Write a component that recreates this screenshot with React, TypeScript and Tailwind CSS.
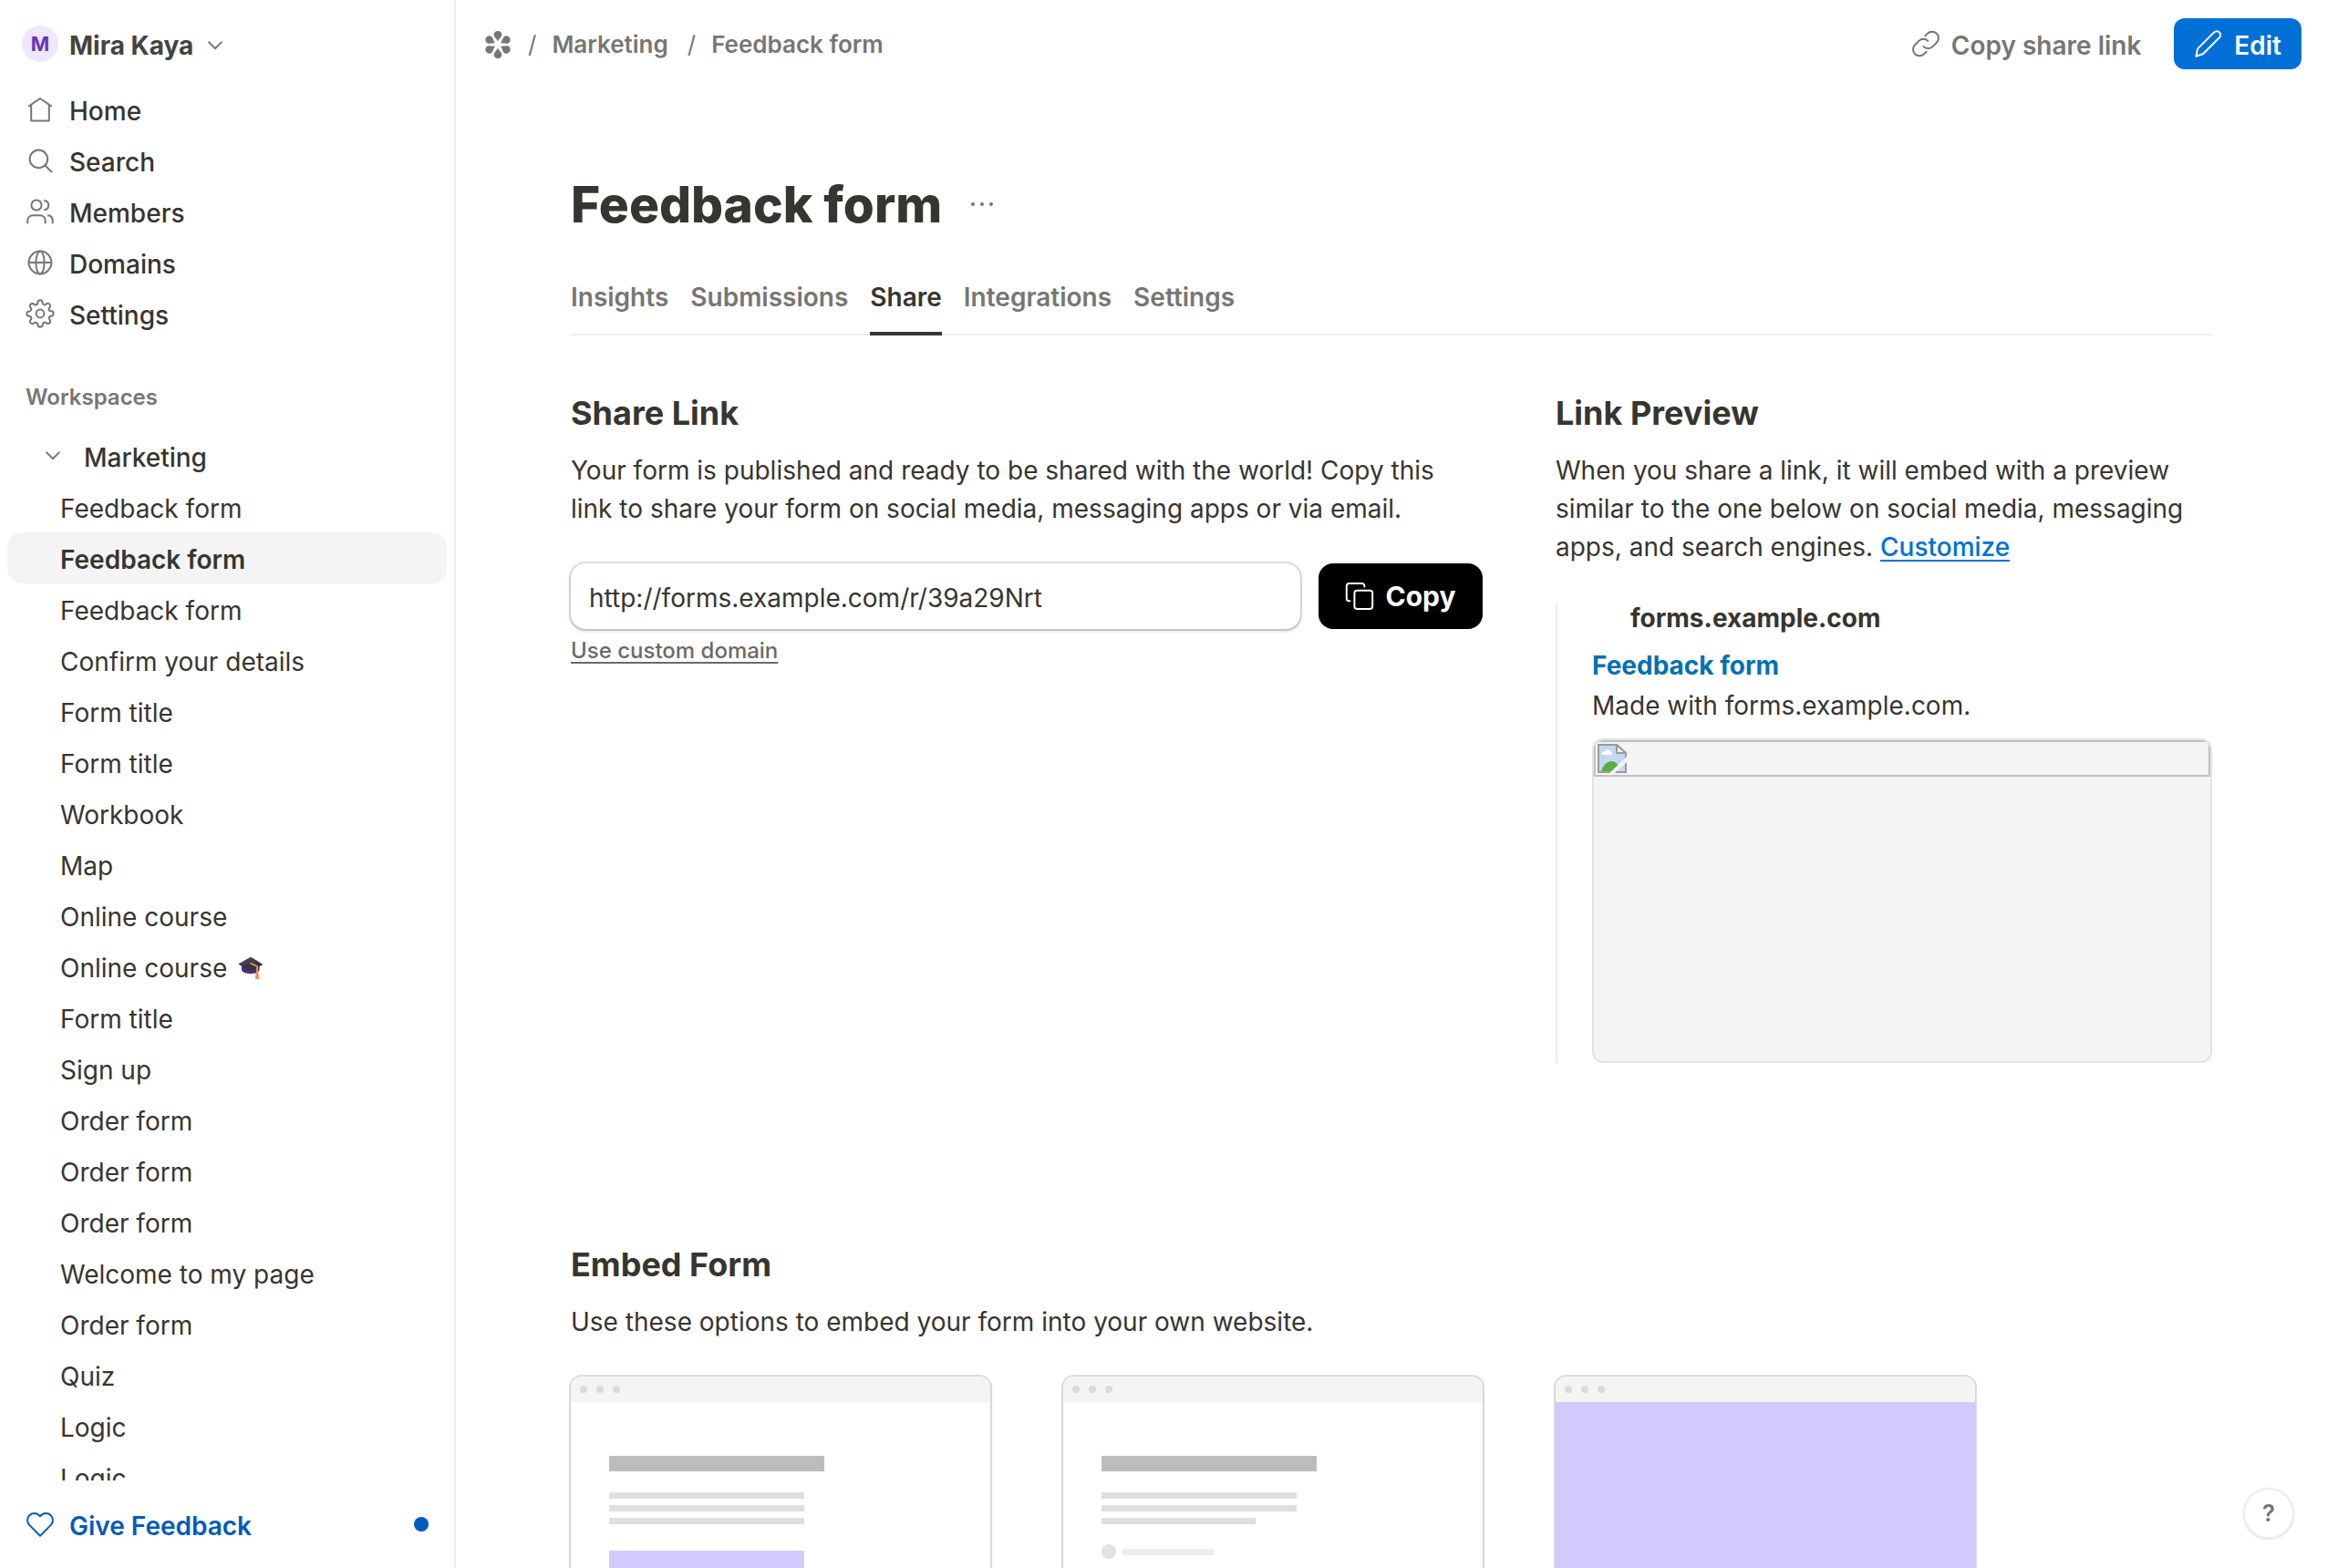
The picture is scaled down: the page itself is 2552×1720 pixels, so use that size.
import React, { useState } from 'react';
import clsx from 'clsx';

type IconProps = { className?: string };

const FORMS: { id: number; title: string; emoji?: boolean }[] = [
  { id: 1, title: 'Feedback form' },
  { id: 2, title: 'Feedback form' },
  { id: 3, title: 'Feedback form' },
  { id: 4, title: 'Confirm your details' },
  { id: 5, title: 'Form title' },
  { id: 6, title: 'Form title' },
  { id: 7, title: 'Workbook' },
  { id: 8, title: 'Map' },
  { id: 9, title: 'Online course' },
  { id: 10, title: 'Online course', emoji: true },
  { id: 11, title: 'Form title' },
  { id: 12, title: 'Sign up' },
  { id: 13, title: 'Order form' },
  { id: 14, title: 'Order form' },
  { id: 15, title: 'Order form' },
  { id: 16, title: 'Welcome to my page' },
  { id: 17, title: 'Order form' },
  { id: 18, title: 'Quiz' },
  { id: 19, title: 'Logic' },
  { id: 20, title: 'Logic' },
];

const TABS = ['Insights', 'Submissions', 'Share', 'Integrations', 'Settings'];

// Shared wrapper for the 32px line icons
function LineIcon({ className, children }: IconProps & { children: React.ReactNode }) {
  return (
    <svg
      viewBox="0 0 32 32"
      className={clsx('h-8 w-8 shrink-0', className)}
      fill="none"
      stroke="currentColor"
      strokeWidth={2}
      strokeLinecap="round"
      strokeLinejoin="round"
      aria-hidden="true"
    >
      {children}
    </svg>
  );
}

const HomeIcon = () => (
  <LineIcon>
    <path d="M3.8 12.3 16 4l12.2 8.3M6.2 11v17.6h19.6V11" />
  </LineIcon>
);

const SearchIcon = () => (
  <LineIcon>
    <circle cx="14.4" cy="14.4" r="9.8" />
    <path d="m21.4 21.5 7.2 7" />
  </LineIcon>
);

const MembersIcon = () => (
  <LineIcon>
    <circle cx="12" cy="9" r="5.6" />
    <path d="M2.3 28.4v-2.6a5.6 5.6 0 0 1 5.6-5.6h8.2a5.6 5.6 0 0 1 5.6 5.6v2.6" />
    <path d="M21 3.9a5.3 5.3 0 0 1 0 10.4M25 20.3a5.6 5.6 0 0 1 4.7 5.5v2.6" />
  </LineIcon>
);

const GlobeIcon = () => (
  <LineIcon>
    <circle cx="16" cy="16" r="12.4" />
    <ellipse cx="16" cy="16" rx="4.6" ry="12.4" />
    <path d="M3.6 16h24.8" />
  </LineIcon>
);

const GearIcon = () => (
  <svg
    viewBox="0 0 24 24"
    className="h-8 w-8 shrink-0"
    fill="none"
    stroke="currentColor"
    strokeWidth={1.5}
    strokeLinecap="round"
    strokeLinejoin="round"
    aria-hidden="true"
  >
    <circle cx="12" cy="12" r="3.3" />
    <path d="M19.4 15a1.65 1.65 0 0 0 .33 1.82l.06.06a2 2 0 0 1 0 2.83 2 2 0 0 1-2.83 0l-.06-.06a1.65 1.65 0 0 0-1.82-.33 1.65 1.65 0 0 0-1 1.51V21a2 2 0 0 1-2 2 2 2 0 0 1-2-2v-.09A1.65 1.65 0 0 0 9 19.4a1.65 1.65 0 0 0-1.82.33l-.06.06a2 2 0 0 1-2.83 0 2 2 0 0 1 0-2.83l.06-.06a1.65 1.65 0 0 0 .33-1.82 1.65 1.65 0 0 0-1.51-1H3a2 2 0 0 1-2-2 2 2 0 0 1 2-2h.09A1.65 1.65 0 0 0 4.6 9a1.65 1.65 0 0 0-.33-1.82l-.06-.06a2 2 0 0 1 0-2.83 2 2 0 0 1 2.83 0l.06.06a1.65 1.65 0 0 0 1.82.33H9a1.65 1.65 0 0 0 1-1.51V3a2 2 0 0 1 2-2 2 2 0 0 1 2 2v.09a1.65 1.65 0 0 0 1 1.51 1.65 1.65 0 0 0 1.82-.33l.06-.06a2 2 0 0 1 2.83 0 2 2 0 0 1 0 2.83l-.06.06a1.65 1.65 0 0 0-.33 1.82V9a1.65 1.65 0 0 0 1.51 1H21a2 2 0 0 1 2 2 2 2 0 0 1-2 2h-.09a1.65 1.65 0 0 0-1.51 1z" />
  </svg>
);

const HeartIcon = () => (
  <LineIcon>
    <path d="M16 28.7 4.3 16.9a7.4 7.4 0 0 1 0-10.6 7.6 7.6 0 0 1 10.7 0l1 1 1-1a7.6 7.6 0 0 1 10.7 0 7.4 7.4 0 0 1 0 10.6z" />
  </LineIcon>
);

const LinkIcon = () => (
  <LineIcon>
    <path d="M15.3 7.3 18 4.8a7 7 0 0 1 9.9 9.9l-4.4 4.4a7 7 0 0 1-9.9 0" />
    <path d="m16.7 24.7-2.7 2.5a7 7 0 0 1-9.9-9.9l4.4-4.4a7 7 0 0 1 9.9 0" />
  </LineIcon>
);

const PencilIcon = () => (
  <LineIcon>
    <path d="m2.4 29.8 1.8-8.4L22.2 3.4a4 4 0 0 1 5.8 0 4 4 0 0 1 0 5.8L10.2 27z" />
  </LineIcon>
);

const CopyIcon = () => (
  <LineIcon>
    <rect x="10.4" y="9.8" width="19.8" height="20.2" rx="3" />
    <path d="M5.4 21.2H4.6a2.8 2.8 0 0 1-2.8-2.8V4.8A2.8 2.8 0 0 1 4.6 2h14a2.8 2.8 0 0 1 2.8 2.8v.8" />
  </LineIcon>
);

const ChevronIcon = () => (
  <svg
    viewBox="0 0 16 10"
    className="h-[10px] w-4 shrink-0 text-[#777672]"
    fill="none"
    stroke="currentColor"
    strokeWidth={2}
    strokeLinecap="round"
    strokeLinejoin="round"
    aria-hidden="true"
  >
    <path d="m1.2 1.4 6.8 6.8 6.8-6.8" />
  </svg>
);

const FlowerLogo = () => (
  <svg viewBox="-16 -16 32 32" className="h-8 w-8" fill="currentColor" aria-hidden="true">
    {[0, 60, 120, 180, 240, 300].map((angle) => (
      <path
        key={angle}
        transform={`rotate(${angle})`}
        d="M0-3.4C-1-6.6-4.3-8-4.3-11a4.3 4.1 0 0 1 8.6 0C4.3-8 1-6.6 0-3.4z"
      />
    ))}
  </svg>
);

const GraduationCap = () => (
  <svg viewBox="0 0 28 26" className="mt-1 h-[26px] w-7" role="img" aria-label="Graduation cap">
    <path d="M4 10v5c1 3 5 4 10 4s8.500-1 9.500-4v-5z" fill="#4a2f78" />
    <path d="M14 1 .5 8.500 13 16.500 27.500 9z" fill="#3a3043" />
    <path d="M14 1 .5 8.500l3 2L22 5.500z" fill="#483c55" />
    <path d="M13.500 7.500 21 11v8" fill="none" stroke="#e9a23b" strokeWidth="1.800" />
    <path d="M19.500 18.500h3l.5 6.500h-4z" fill="#f58a4b" />
  </svg>
);

// The placeholder the browser shows for an image that did not load
const BrokenImage = () => (
  <svg viewBox="0 0 32 32" className="h-8 w-8" role="img" aria-label="Link preview image">
    <path d="M1 1h20l10 9v21H1z" fill="#c6d7f6" stroke="#9a9a9a" strokeWidth="2" />
    <path d="M5 12a3 3 0 0 1 3-4 4 4 0 0 1 7 1 2.500 2.500 0 0 1 1 3z" fill="#fff" />
    <path d="M4 30c2-7 7-11 11-11s6 2 8 5l-6 6z" fill="#5aad3f" />
    <path d="M21 1v9h10z" fill="#f2f2f2" stroke="#9a9a9a" strokeWidth="2" />
    <path d="m13 32 19-18v6L19 32z" fill="#f4f4f4" />
    <path d="M20 31h11V22" fill="none" stroke="#9a9a9a" strokeWidth="2" />
  </svg>
);

const NAV = [
  { label: 'Home', icon: <HomeIcon /> },
  { label: 'Search', icon: <SearchIcon /> },
  { label: 'Members', icon: <MembersIcon /> },
  { label: 'Domains', icon: <GlobeIcon /> },
  { label: 'Settings', icon: <GearIcon /> },
];

function Sidebar() {
  const [activeForm, setActiveForm] = useState(2);

  return (
    <aside className="flex h-full w-[500px] shrink-0 flex-col border-r-2 border-[#ededec]">
      <div className="flex min-h-0 flex-1 flex-col overflow-hidden">
        <button className="mt-5 flex h-14 shrink-0 items-center gap-3 px-6 font-bold text-[#444340]">
          <span className="flex h-10 w-10 items-center justify-center rounded-full bg-[#efe6ff] text-[22px] font-bold text-[#6236b5]">
            M
          </span>
          <span className="mt-1">Mira Kaya</span>
          <span className="mt-1 ml-1">
            <ChevronIcon />
          </span>
        </button>

        <nav className="mt-4 shrink-0">
          {NAV.map((item) => (
            <a key={item.label} href="#" className="flex h-14 items-center gap-4 px-7 font-medium">
              <span className="text-[#777672]">{item.icon}</span>
              <span className="mt-1">{item.label}</span>
            </a>
          ))}
        </nav>

        <h2 className="mt-12 shrink-0 px-7 text-2xl leading-8 font-semibold text-[#777672]">Workspaces</h2>

        <button className="mt-5 flex h-14 shrink-0 items-center gap-[26px] pl-[50px] font-medium">
          <ChevronIcon />
          <span className="mt-1">Marketing</span>
        </button>

        <ul className="px-2">
          {FORMS.map((form) => (
            <li key={form.id}>
              <a
                href="#"
                onClick={() => setActiveForm(form.id)}
                className={clsx(
                  'flex h-14 items-center gap-3 rounded-2xl pl-[58px]',
                  form.id === activeForm && 'bg-[#f4f4f4] font-semibold'
                )}
              >
                <span className="mt-1">{form.title}</span>
                {form.emoji && <GraduationCap />}
              </a>
            </li>
          ))}
        </ul>
      </div>

      <a href="#" className="my-5 flex h-14 shrink-0 items-center gap-4 px-7 font-semibold text-[#005bb8]">
        <HeartIcon />
        <span className="mt-1">Give Feedback</span>
        <span className="ml-auto h-4 w-4 rounded-full bg-[#005bbf]" />
      </a>
    </aside>
  );
}

function TopBar() {
  return (
    <header className="flex h-24 shrink-0 items-center pr-7 pl-[30px] text-[#777672]">
      <nav
        aria-label="Breadcrumb"
        className="flex items-center gap-[17px] pt-[2px] text-[26px] leading-9 font-semibold"
      >
        <a href="#" aria-label="Dashboard">
          <FlowerLogo />
        </a>
        <span className="font-normal">/</span>
        <a href="#">Marketing</a>
        <span className="ml-1 font-normal">/</span>
        <a href="#">Feedback form</a>
      </nav>
      <div className="ml-auto flex items-center gap-9 font-semibold">
        <button className="flex items-center gap-3">
          <LinkIcon />
          <span className="mt-1">Copy share link</span>
        </button>
        <button className="flex h-14 items-center gap-3 rounded-xl bg-[#0070d7] px-[22px] text-white">
          <PencilIcon />
          <span className="mt-1">Edit</span>
        </button>
      </div>
    </header>
  );
}

function ShareLink() {
  return (
    <section>
      <h2 className="text-4xl leading-[44px] font-bold">Share Link</h2>
      <p className="mt-5 leading-[42px]">
        Your form is published and ready to be shared with the world! Copy this link to share your form on social
        media, messaging apps or via email.
      </p>
      <div className="mt-[39px] flex gap-5">
        <input
          type="text"
          readOnly
          aria-label="Share link"
          value="http://forms.example.com/r/39a29Nrt"
          className="h-[72px] min-w-0 flex-1 rounded-2xl px-5 pt-1 shadow-[0_0_0_2px_rgba(55,53,47,0.16),0_2px_4px_rgba(55,53,47,0.24)] outline-none"
        />
        <button className="flex h-[72px] w-[180px] items-center justify-center gap-3 rounded-2xl bg-black text-3xl font-bold text-white">
          <CopyIcon />
          Copy
        </button>
      </div>
      <a
        href="#"
        className="mt-2 inline-block text-2xl leading-8 font-medium text-[#6b6a66] underline decoration-2 underline-offset-4"
      >
        Use custom domain
      </a>
    </section>
  );
}

function LinkPreview() {
  return (
    <section>
      <h2 className="text-4xl leading-[44px] font-bold">Link Preview</h2>
      <p className="mt-5 leading-[42px]">
        When you share a link, it will embed with a preview similar to the one below on social media, messaging apps,
        and search engines.{' '}
        <a href="#" className="font-medium text-[#0070d7] underline decoration-2 underline-offset-4">
          Customize
        </a>
      </p>
      <div className="mt-[39px] border-l-2 border-[#ededec] pl-[38px]">
        <div className="pl-[42px] leading-9 font-bold">forms.example.com</div>
        <a href="#" className="mt-3 block leading-[44px] font-bold text-[#0071b2]">
          Feedback form
        </a>
        <p className="leading-[44px]">Made with forms.example.com.</p>
        <div className="mt-[14px] aspect-[680/356] overflow-hidden rounded-xl border-2 border-[#e2e2e2] bg-[#f4f4f4]">
          <div className="border-2 border-[#c0c0c0] p-[2px]">
            <BrokenImage />
          </div>
        </div>
      </div>
    </section>
  );
}

function EmbedCard({ filled, children }: { filled?: boolean; children?: React.ReactNode }) {
  return (
    <button className="flex h-[320px] w-[460px] flex-col overflow-hidden rounded-xl shadow-[0_0_0_2px_rgba(55,53,47,0.16),0_2px_4px_rgba(55,53,47,0.12)]">
      <span className="flex h-7 w-full shrink-0 items-center gap-[10px] bg-[#f4f4f4] px-[10px]">
        <span className="h-2 w-2 rounded-full bg-[#dadada]" />
        <span className="h-2 w-2 rounded-full bg-[#dadada]" />
        <span className="h-2 w-2 rounded-full bg-[#dadada]" />
      </span>
      <span className={clsx('block w-full flex-1 px-[42px] pt-[59px]', filled && 'bg-[#d2cafd]')}>{children}</span>
    </button>
  );
}

function EmbedForm() {
  return (
    <section className="mt-[199px]">
      <h2 className="text-4xl leading-[44px] font-bold">Embed Form</h2>
      <p className="mt-5 leading-[42px]">Use these options to embed your form into your own website.</p>
      <div className="mt-[39px] flex gap-20">
        <EmbedCard>
          <span className="block h-[17px] w-[236px] bg-[#bcbcbc]" />
          <span className="mt-[23px] flex flex-col gap-[7px]">
            <span className="h-[7px] w-[214px] bg-[#dedede]" />
            <span className="h-[7px] w-[214px] bg-[#dedede]" />
            <span className="h-[7px] w-[214px] bg-[#dedede]" />
          </span>
          <span className="mt-[29px] block h-20 w-[214px] bg-[#d2cafd]" />
        </EmbedCard>
        <EmbedCard>
          <span className="block h-[17px] w-[236px] bg-[#bcbcbc]" />
          <span className="mt-[23px] flex flex-col gap-[7px]">
            <span className="h-[7px] w-[214px] bg-[#dedede]" />
            <span className="h-[7px] w-[214px] bg-[#dedede]" />
            <span className="h-[7px] w-[169px] bg-[#dedede]" />
          </span>
          <span className="mt-[22px] flex items-center gap-[7px]">
            <span className="h-4 w-4 rounded-full bg-[#e2e2e2]" />
            <span className="h-[7px] w-[100px] bg-[#ededed]" />
          </span>
        </EmbedCard>
        <EmbedCard filled />
      </div>
    </section>
  );
}

export default function App() {
  const [activeTab, setActiveTab] = useState('Share');

  return (
    <div className="flex h-screen overflow-hidden bg-white font-['Inter',sans-serif] text-[28px] leading-10 text-[#37352f]">
      <Sidebar />

      <div className="flex min-w-0 flex-1 flex-col">
        <TopBar />
        <main className="min-h-0 flex-1 overflow-hidden px-16">
          <div className="mx-auto w-full max-w-[1800px] pt-24">
            <div className="flex items-center gap-8">
              <h1 className="text-[55px] leading-[64px] font-extrabold">Feedback form</h1>
              <button aria-label="More options" className="flex gap-[6px]">
                <span className="h-1 w-1 rounded-full bg-[#777672]" />
                <span className="h-1 w-1 rounded-full bg-[#777672]" />
                <span className="h-1 w-1 rounded-full bg-[#777672]" />
              </button>
            </div>

            <nav role="tablist" className="mt-[50px] flex gap-6 border-b-2 border-[#ededec]">
              {TABS.map((tab) => (
                <button
                  key={tab}
                  role="tab"
                  aria-selected={tab === activeTab}
                  onClick={() => setActiveTab(tab)}
                  className={clsx(
                    '-mb-[2px] border-b-4 pb-[18px] font-semibold',
                    tab === activeTab ? 'border-[#37352f]' : 'border-transparent text-[#777672]'
                  )}
                >
                  {tab}
                </button>
              ))}
            </nav>

            <div className="mt-[63px] grid grid-cols-[25fr_18fr] gap-20">
              <ShareLink />
              <LinkPreview />
            </div>

            <EmbedForm />
          </div>
        </main>
      </div>

      <button
        aria-label="Help"
        className="fixed right-9 bottom-8 flex h-14 w-14 items-center justify-center rounded-full border-2 border-[#ededec] bg-white text-[26px] font-semibold text-[#777672] shadow-sm"
      >
        ?
      </button>
    </div>
  );
}
